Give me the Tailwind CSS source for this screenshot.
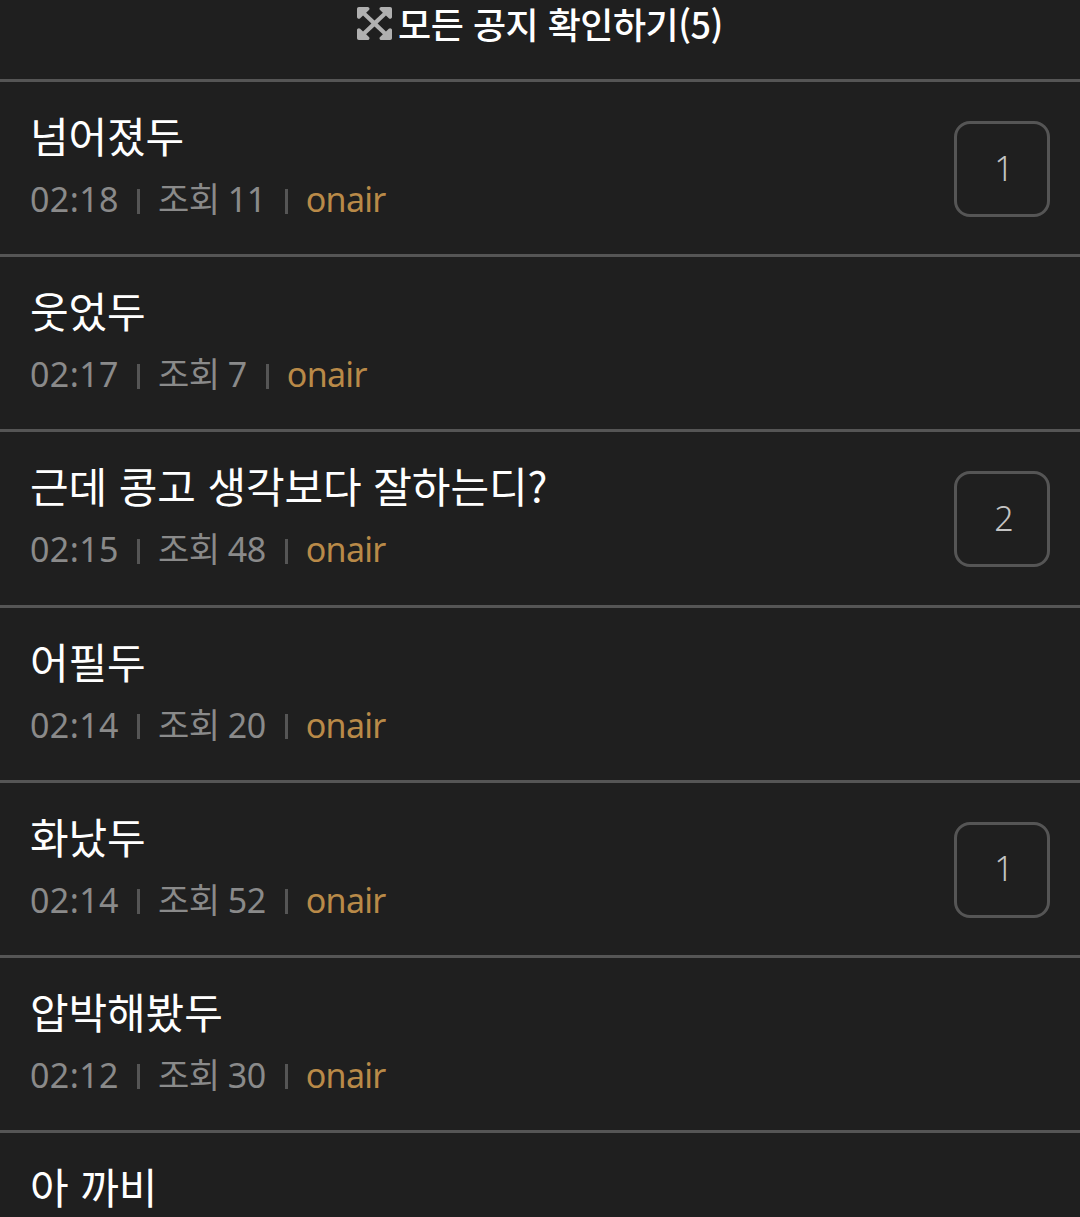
<!DOCTYPE html>
<html lang="ko">
<head>
  <meta charset="UTF-8" />
  <title>공지</title>
  <script src="https://cdn.jsdelivr.net/npm/@tailwindcss/browser@4"></script>
</head>
<body class="bg-[#1f1f1f] font-['Noto_Sans','Noto_Sans_CJK_KR',sans-serif]">
  <div class="h-[1217px] overflow-hidden">
    <header class="h-[82px] border-b-[3px] border-[#555] flex justify-center gap-[6px] pt-[5px] font-['Noto_Sans_CJK_KR',sans-serif]">
      <svg class="mt-[2px] w-[35px] h-[33px] fill-[#b0b0b0]" viewBox="0 32 448 448" preserveAspectRatio="none"><path d="M448 344v112a23.94 23.94 0 0 1-24 24H312c-21.39 0-32.09-25.9-17-41l36.2-36.2L224 295.6 116.77 402.9 153 439c15.09 15.1 4.39 41-17 41H24a23.94 23.94 0 0 1-24-24V344c0-21.4 25.89-32.1 41-17l36.19 36.2L184.46 256 77.18 148.7 41 185c-15.1 15.1-41 4.4-41-17V56a23.94 23.94 0 0 1 24-24h112c21.39 0 32.09 25.9 17 41l-36.2 36.2L224 216.4l107.23-107.3L295 73c-15.09-15.1-4.39-41 17-41h112a23.94 23.94 0 0 1 24 24v112c0 21.4-25.89 32.1-41 17l-36.19-36.2L263.54 256l107.28 107.3L407 327.1c15.1-15.2 41-4.5 41 16.9z"/></svg>
      <span class="text-[36px] leading-[36px] font-medium text-white tracking-[-0.5px]">모든 공지 확인하기(5)</span>
    </header>

    <ul>
      <li class="h-[175.2px] border-b-[3px] border-[#555] px-[30px] flex items-center justify-between">
        <div class="self-start pt-[25px]">
          <p class="text-[42px] leading-[56px] text-white tracking-[-0.1px] font-['Noto_Sans_CJK_KR',sans-serif]">넘어졌두</p>
          <p class="mt-[14px] flex items-center text-[34px] leading-[44px] text-[#8a8a8a]"><span class="tracking-[0.4px]">02:18</span><i class="w-[3px] h-[25px] mt-[4px] bg-[#555] mx-[18px]"></i><span class="tracking-[-0.5px]">조회 11</span><i class="w-[3px] h-[25px] mt-[4px] bg-[#555] ml-[19px] mr-[18px]"></i><span class="text-[#b98a48] tracking-[-0.7px]">onair</span></p>
        </div>
        <div class="mt-[2px] pl-[4px] pb-[2px] w-[96px] h-[96px] border-[3px] border-[#555] rounded-[16px] flex items-center justify-center text-[34px] font-light text-[#c4c4c4]">1</div>
      </li>
      <li class="h-[175.2px] border-b-[3px] border-[#555] px-[30px] flex items-center justify-between">
        <div class="self-start pt-[25px]">
          <p class="text-[42px] leading-[56px] text-white tracking-[-0.1px] font-['Noto_Sans_CJK_KR',sans-serif]">웃었두</p>
          <p class="mt-[14px] flex items-center text-[34px] leading-[44px] text-[#8a8a8a]"><span class="tracking-[0.4px]">02:17</span><i class="w-[3px] h-[25px] mt-[4px] bg-[#555] mx-[18px]"></i><span class="tracking-[-0.5px]">조회 7</span><i class="w-[3px] h-[25px] mt-[4px] bg-[#555] ml-[19px] mr-[18px]"></i><span class="text-[#b98a48] tracking-[-0.7px]">onair</span></p>
        </div>
      </li>
      <li class="h-[175.2px] border-b-[3px] border-[#555] px-[30px] flex items-center justify-between">
        <div class="self-start pt-[25px]">
          <p class="text-[42px] leading-[56px] text-white tracking-[-0.1px] font-['Noto_Sans_CJK_KR',sans-serif]">근데 콩고 생각보다 잘하는디?</p>
          <p class="mt-[14px] flex items-center text-[34px] leading-[44px] text-[#8a8a8a]"><span class="tracking-[0.4px]">02:15</span><i class="w-[3px] h-[25px] mt-[4px] bg-[#555] mx-[18px]"></i><span class="tracking-[-0.5px]">조회 48</span><i class="w-[3px] h-[25px] mt-[4px] bg-[#555] ml-[19px] mr-[18px]"></i><span class="text-[#b98a48] tracking-[-0.7px]">onair</span></p>
        </div>
        <div class="mt-[2px] pl-[4px] pb-[2px] w-[96px] h-[96px] border-[3px] border-[#555] rounded-[16px] flex items-center justify-center text-[34px] font-light text-[#c4c4c4]">2</div>
      </li>
      <li class="h-[175.2px] border-b-[3px] border-[#555] px-[30px] flex items-center justify-between">
        <div class="self-start pt-[25px]">
          <p class="text-[42px] leading-[56px] text-white tracking-[-0.1px] font-['Noto_Sans_CJK_KR',sans-serif]">어필두</p>
          <p class="mt-[14px] flex items-center text-[34px] leading-[44px] text-[#8a8a8a]"><span class="tracking-[0.4px]">02:14</span><i class="w-[3px] h-[25px] mt-[4px] bg-[#555] mx-[18px]"></i><span class="tracking-[-0.5px]">조회 20</span><i class="w-[3px] h-[25px] mt-[4px] bg-[#555] ml-[19px] mr-[18px]"></i><span class="text-[#b98a48] tracking-[-0.7px]">onair</span></p>
        </div>
      </li>
      <li class="h-[175.2px] border-b-[3px] border-[#555] px-[30px] flex items-center justify-between">
        <div class="self-start pt-[25px]">
          <p class="text-[42px] leading-[56px] text-white tracking-[-0.1px] font-['Noto_Sans_CJK_KR',sans-serif]">화났두</p>
          <p class="mt-[14px] flex items-center text-[34px] leading-[44px] text-[#8a8a8a]"><span class="tracking-[0.4px]">02:14</span><i class="w-[3px] h-[25px] mt-[4px] bg-[#555] mx-[18px]"></i><span class="tracking-[-0.5px]">조회 52</span><i class="w-[3px] h-[25px] mt-[4px] bg-[#555] ml-[19px] mr-[18px]"></i><span class="text-[#b98a48] tracking-[-0.7px]">onair</span></p>
        </div>
        <div class="mt-[2px] pl-[4px] pb-[2px] w-[96px] h-[96px] border-[3px] border-[#555] rounded-[16px] flex items-center justify-center text-[34px] font-light text-[#c4c4c4]">1</div>
      </li>
      <li class="h-[175.2px] border-b-[3px] border-[#555] px-[30px] flex items-center justify-between">
        <div class="self-start pt-[25px]">
          <p class="text-[42px] leading-[56px] text-white tracking-[-0.1px] font-['Noto_Sans_CJK_KR',sans-serif]">압박해봤두</p>
          <p class="mt-[14px] flex items-center text-[34px] leading-[44px] text-[#8a8a8a]"><span class="tracking-[0.4px]">02:12</span><i class="w-[3px] h-[25px] mt-[4px] bg-[#555] mx-[18px]"></i><span class="tracking-[-0.5px]">조회 30</span><i class="w-[3px] h-[25px] mt-[4px] bg-[#555] ml-[19px] mr-[18px]"></i><span class="text-[#b98a48] tracking-[-0.7px]">onair</span></p>
        </div>
      </li>
      <li class="h-[85px] px-[30px] pt-[25px]">
        <p class="text-[42px] leading-[56px] text-white tracking-[-0.1px] font-['Noto_Sans_CJK_KR',sans-serif]">아 까비</p>
      </li>
    </ul>
  </div>
</body>
</html>
